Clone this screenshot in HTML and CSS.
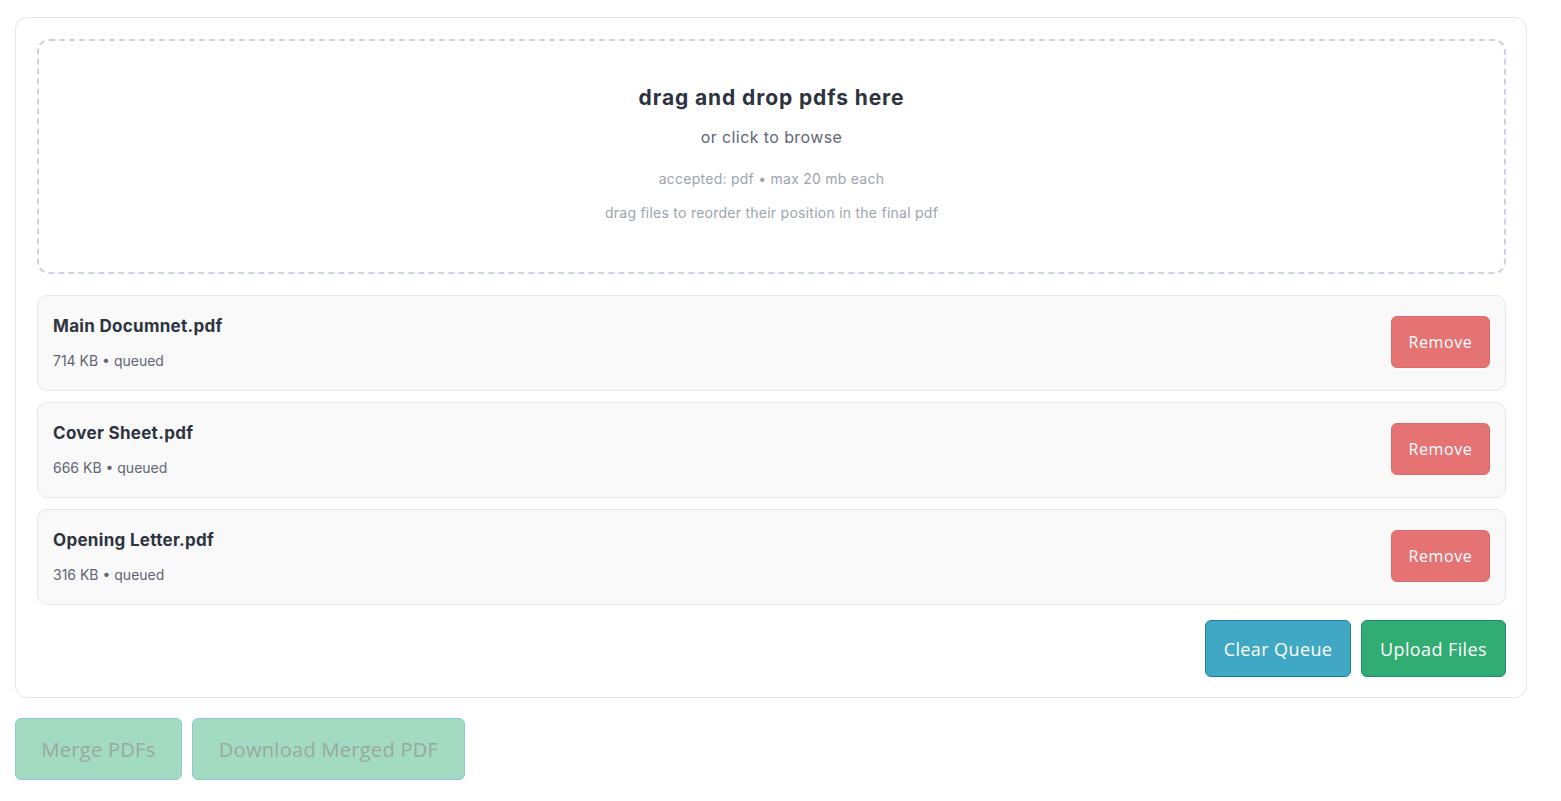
FILE: index.html
```html
<!DOCTYPE html>
<html lang="en">
<head>
    <meta charset="UTF-8">
    <meta name="viewport" content="width=device-width, initial-scale=1.0">
    <title>Merge PDFs</title>
    <link rel="stylesheet" href="styles.css">
</head>
<body>
    <div class="uploader">
        <div class="dropzone">
            <h3>drag and drop pdfs here</h3>
            <p class="browse">or click to browse</p>
            <p class="hint">accepted: pdf • max 20 mb each</p>
            <p class="hint">drag files to reorder their position in the final pdf</p>
        </div>

        <ul class="queue">
            <li class="file">
                <div class="info">
                    <span class="name">Main Documnet.pdf</span>
                    <span class="meta">714 KB • queued</span>
                </div>
                <button class="btn remove">Remove</button>
            </li>
            <li class="file">
                <div class="info">
                    <span class="name">Cover Sheet.pdf</span>
                    <span class="meta">666 KB • queued</span>
                </div>
                <button class="btn remove">Remove</button>
            </li>
            <li class="file">
                <div class="info">
                    <span class="name">Opening Letter.pdf</span>
                    <span class="meta">316 KB • queued</span>
                </div>
                <button class="btn remove">Remove</button>
            </li>
        </ul>

        <div class="actions">
            <button class="btn big clear">Clear Queue</button>
            <button class="btn big upload">Upload Files</button>
        </div>
    </div>

    <div class="merge">
        <button class="btn disabled" disabled>Merge PDFs</button>
        <button class="btn disabled" disabled>Download Merged PDF</button>
    </div>
</body>
</html>
```

FILE: styles.css
```css
*{margin:0; padding:0; box-sizing:border-box;}
body{font-family: Inter, "Noto Sans", sans-serif; color:#2d3340; background:#fff; padding:17px 34px 0 15px;}

.uploader{border:1px solid #e5e5e5; border-radius:12px; padding:21px 20px 20px 21px;}
.dropzone{border:2px dashed #cbd3e0; border-radius:12px; height:235px; display:flex; flex-direction:column; align-items:center; padding-top:44px;}
.dropzone h3{font-size:21px; font-weight:700; color:#2d3340; line-height:26px; letter-spacing:0.9px;}
.browse{font-size:16px; color:#5f6675; margin-top:16px; line-height:20px; letter-spacing:0.4px;}
.hint{font-size:14px; color:#9ca3af; line-height:18px; letter-spacing:0.25px;}
.browse + .hint{margin-top:23px;}
.hint + .hint{margin-top:16px;}

.queue{list-style:none; display:flex; flex-direction:column; gap:11px; margin-top:21px;}
.file{background:#f9f9f9; border:1px solid #e5e7eb; border-radius:10px; height:96px; display:flex; align-items:center; justify-content:space-between; padding:0 15px 0 15px;}
.info{display:flex; flex-direction:column; gap:16px;}
.name{font-size:17px; font-weight:700; color:#2d3340; line-height:20px; letter-spacing:0.3px;}
.meta{font-size:14px; color:#5f6675; line-height:18px;}

.btn{font-family: "Open Sans", sans-serif; border:1px solid transparent; border-radius:6px; color:#fff; cursor:pointer;}
.remove{background:#e57373; border-color:#dc6a6a; width:99px; height:52px; font-size:16px; letter-spacing:0.6px; margin-top:-3px;}
.big{height:57px; font-size:18px; letter-spacing:0.4px;}

.actions{display:flex; justify-content:flex-end; gap:10px; margin-top:15px;}
.clear{background:#40a8c4; border-color:#1a7f9f; width:146px;}
.upload{background:#31ad74; border-color:#1d8a6a; width:145px;}

.merge{display:flex; gap:10px; margin-top:20px;}
.disabled{background:#a2dac2; border-color:#8ec8d0; color:#9aa8a2; height:62px; font-size:20px; letter-spacing:0.3px; cursor:default;}
.merge .disabled:first-child{width:167px;}
.merge .disabled:last-child{width:273px;}
```
